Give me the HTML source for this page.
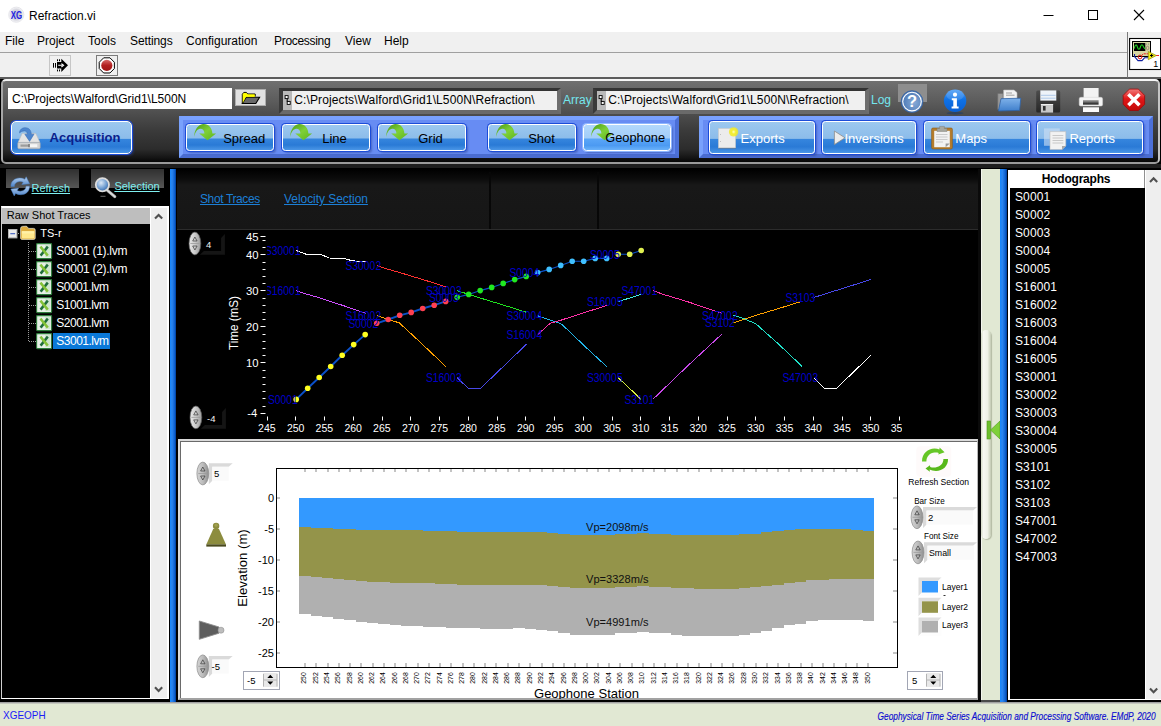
<!DOCTYPE html>
<html>
<head>
<meta charset="utf-8">
<title>Refraction.vi</title>
<style>
*{box-sizing:border-box;margin:0;padding:0}
html,body{width:1161px;height:726px;overflow:hidden;background:#000;font-family:"Liberation Sans",sans-serif;font-size:12px;color:#000}
.abs{position:absolute}
#root{position:absolute;left:0;top:0;width:1161px;height:726px;overflow:hidden;background:#000}
/* title + menu */
#title{left:0;top:0;width:1161px;height:32px;background:#fff}
#title .t{left:29px;top:9px;font-size:12px;color:#000;white-space:nowrap}
#menu{left:0;top:32px;width:1161px;height:21px;background:#f0f0f0}
#menul{left:0;top:52px;width:1127px;height:1px;background:#a0a0a0}
#menu span{position:absolute;top:2px;font-size:12px;white-space:nowrap;color:#000}
#tool{left:0;top:53px;width:1161px;height:24px;background:#f0f0f0}
/* dark panel */
#dark{left:1px;top:79px;width:1159px;height:85px;background:linear-gradient(#707070 0,#5c5c5c 25%,#4b4b4b 43%,#3a3a3a 62%,#2c2c2c 84%,#161616 94%,#050505 100%);border:2px solid;border-color:#f6f6f6 #c4c4c4 #9a9a9a #a6a6a6;border-radius:5px}
#darkbg{left:0;top:77px;width:1161px;height:92px;background:linear-gradient(#5c5c5c 0,#5c5c5c 2px,#000 2px,#000 87px,#1e1e1e 87px,#1e1e1e 91px,#000 91px)}
.inp{background:#fff;height:21px;font-size:12px;line-height:22px;white-space:nowrap;overflow:hidden;color:#000}
.bluep{background:#678cf3;border-style:solid;border-width:4px;border-color:#79a1ff #4c70d8 #4a6cd0 #79a1fc}
.btn{border:1.5px solid #fff;border-radius:3.5px;background:linear-gradient(#9cc8ef 0,#8cbcea 53%,#3686de 55%,#2a7ad6 80%,#4a96e6 100%);box-shadow:0 0 0 1px #1c4cd8, 2px 2px 2px rgba(40,60,140,0.45);font-size:13px;white-space:nowrap}
.btn.hl{background:linear-gradient(#b2d8fc 0,#a2cdf8 53%,#5aa6f8 55%,#4c9af2 82%,#6ab2fa 100%);box-shadow:0 0 0 1px #8db6ff, 2px 2px 2px rgba(40,60,140,0.45)}
.btn span{position:absolute;white-space:nowrap;z-index:5}
.lbl{color:#74e6ee;font-size:12px;white-space:nowrap}
/* left */
.tv{color:#fff;font-size:13px;white-space:nowrap}
.lnk{font-size:13px;text-decoration:underline;white-space:nowrap}
.hod{color:#fff;font-size:12px;white-space:nowrap;left:1015px}
</style>
</head>
<body>
<div id="root">

<!-- TITLE BAR -->
<div id="title" class="abs">
  <svg class="abs" style="left:6px;top:4px" width="22" height="22" viewBox="6 4 22 22"><defs><radialGradient id="xg" cx="0.5" cy="0.5" r="0.5"><stop offset="0" stop-color="#b9b9c4"/><stop offset="0.7" stop-color="#d8d8e0"/><stop offset="1" stop-color="#fbfbfd"/></radialGradient></defs><circle cx="16.3" cy="14.7" r="7.6" fill="url(#xg)" stroke="#dcdce2" stroke-width="0.7"/><text x="16.5" y="18.6" font-family="Liberation Sans" font-size="10.2" font-weight="bold" fill="#2222e4" text-anchor="middle" textLength="11.4" lengthAdjust="spacingAndGlyphs">XG</text></svg>
  <div class="abs t">Refraction.vi</div>
  <svg class="abs" style="left:1040px;top:6px" width="110" height="20" viewBox="0 0 110 20"><path d="M3.5 9.5h10" stroke="#000" stroke-width="1" fill="none"/><rect x="48.5" y="4.5" width="9" height="9" fill="none" stroke="#000" stroke-width="1"/><path d="M94 4l10 10M104 4l-10 10" stroke="#000" stroke-width="1.1" fill="none"/></svg>
</div>

<!-- MENU -->
<div id="menu" class="abs">
  <span style="left:5px">File</span><span style="left:37px">Project</span><span style="left:88px">Tools</span><span style="left:130px;letter-spacing:-0.1px">Settings</span><span style="left:186px">Configuration</span><span style="left:274px;letter-spacing:-0.3px">Processing</span><span style="left:345px">View</span><span style="left:384px">Help</span>
</div>
<div id="tool" class="abs"></div><div id="menul" class="abs"></div>

<!-- DARK PANEL -->
<div id="darkbg" class="abs"></div>
<div id="dark" class="abs"></div>
<svg width="0" height="0" style="position:absolute">
  <defs>
    <linearGradient id="gg" x1="0" y1="0" x2="1" y2="1"><stop offset="0" stop-color="#2f7a10"/><stop offset="0.45" stop-color="#6cc52a"/><stop offset="1" stop-color="#58b01c"/></linearGradient>
    <symbol id="garrow" viewBox="0 0 24 18">
      <path d="M1.5 10.5 C2.5 4.5 8 1 13 2 C17 2.8 19.5 5.5 19.8 8.8 L23.3 8.8 L17.2 16.5 L10.6 8.8 L14.6 8.8 C14.2 6.8 12.6 5.6 10.4 5.5 C6.5 5.3 3.6 7.6 1.5 10.5 Z" fill="url(#gg)" stroke="#3d8a14" stroke-width="0.5"/>
    </symbol>
  </defs>
</svg>
<div class="abs inp" style="left:8px;top:88px;width:224px;padding-left:4px">C:\Projects\Walford\Grid1\L500N</div>
<div class="abs" id="fold" style="left:235px;top:89px;width:31px;height:17px;background:#e1e1e1;border:1px solid #adadad"></div>
<div class="abs" style="left:279px;top:88px;width:282px;height:26px;background:#3a3a3a;border-style:solid;border-width:3px 4px 4px 4px;border-color:#333 #6e6e6e #6a6a6a #3a3a3a"></div>
<div class="abs" style="left:283px;top:91px;width:9px;height:19px;background:#b9b9b9"></div>
<div class="abs inp" style="left:292px;top:91px;width:265px;height:19px;background:#f0f0f0;padding-left:2.3px;line-height:19px;letter-spacing:0.11px">C:\Projects\Walford\Grid1\L500N\Refraction\</div>
<div class="abs lbl" style="left:563px;top:93px">Array</div>
<div class="abs" style="left:593px;top:88px;width:276px;height:26px;background:#3a3a3a;border-style:solid;border-width:3px 4px 4px 4px;border-color:#333 #6e6e6e #6a6a6a #3a3a3a"></div>
<div class="abs" style="left:597px;top:91px;width:9px;height:19px;background:#b9b9b9"></div>
<div class="abs inp" style="left:606px;top:91px;width:259px;height:19px;background:#f0f0f0;padding-left:2.3px;line-height:19px;letter-spacing:0.11px">C:\Projects\Walford\Grid1\L500N\Refraction\</div>
<div class="abs lbl" style="left:871px;top:93px">Log</div>

<div class="abs" style="left:898px;top:84px;width:29px;height:18px;background:#8e8e8e"></div>
<!-- Acquisition -->
<div class="abs btn" style="left:11px;top:121px;width:121px;height:33px;border-radius:5px"><span style="left:37.6px;top:8px;font-weight:bold;color:#0b1e8c;font-size:13px">Acquisition</span></div>

<!-- blue panel 1 -->
<div class="abs bluep" style="left:179px;top:116px;width:500px;height:42px"></div>
<div class="abs btn" style="left:186px;top:124px;width:88px;height:27px"><span style="left:36.2px;top:6px">Spread</span></div>
<div class="abs btn" style="left:282px;top:124px;width:88px;height:27px"><span style="left:39.2px;top:6px">Line</span></div>
<div class="abs btn" style="left:378px;top:124px;width:88px;height:27px"><span style="left:39.2px;top:6px">Grid</span></div>
<div class="abs btn" style="left:488px;top:124px;width:88px;height:27px"><span style="left:39.2px;top:6px">Shot</span></div>
<div class="abs btn hl" style="left:583px;top:124px;width:88px;height:27px"><span style="left:21.3px;top:5.3px;font-size:12.8px">Geophone</span></div>

<!-- blue panel 2 -->
<div class="abs bluep" style="left:699px;top:116px;width:454px;height:42px"></div>
<div class="abs btn" style="left:709px;top:121px;width:106px;height:33px;color:#fff"><span style="left:30.6px;top:8.8px">Exports</span></div>
<div class="abs btn" style="left:822px;top:121px;width:94px;height:33px;color:#fff"><span style="left:21.5px;top:8.8px">Inversions</span></div>
<div class="abs btn" style="left:924px;top:121px;width:106px;height:33px;color:#fff"><span style="left:30.3px;top:8.8px">Maps</span></div>
<div class="abs btn" style="left:1037px;top:121px;width:106px;height:33px;color:#fff"><span style="left:31.4px;top:8.8px">Reports</span></div>

<!-- LEFT: refresh / selection -->
<div class="abs" style="left:6px;top:169px;width:73px;height:19px;background:linear-gradient(#303030,#565656)"></div>
<div class="abs" style="left:91px;top:169px;width:73px;height:19px;background:linear-gradient(#303030,#565656)"></div>
<div class="abs lnk" style="left:31.5px;top:181.5px;color:#7ff0f0;font-size:11px;line-height:13px">Refresh</div>
<div class="abs lnk" style="left:114.4px;top:179.6px;color:#7ff0f0;font-size:11px;line-height:13px">Selection</div>

<!-- tree panel -->
<div class="abs" style="left:0.5px;top:205.5px;width:168.5px;height:493.5px;background:#000;border-style:solid;border-width:2px 2px 1px 1.3px;border-color:#fff #fff #fff #d0d0d0"></div>
<div class="abs" style="left:1.8px;top:207.5px;width:148.2px;height:16.3px;background:#bebebe;font-size:11px;line-height:15px;padding-left:5px">Raw Shot Traces</div>
<div class="abs" style="left:150px;top:207.5px;width:17px;height:490.5px;background:#eee;border-left:1px solid #fff"></div>
<svg class="abs" style="left:150px;top:207px" width="18" height="491" viewBox="0 0 18 491"><path d="M5 11.6l3.6-3.7 3.6 3.7" fill="none" stroke="#505050" stroke-width="2.1"/><path d="M5 480.2l3.6 3.7 3.6-3.7" fill="none" stroke="#505050" stroke-width="2.1"/></svg>
<svg class="abs" style="left:0;top:225px" width="60" height="130" viewBox="0 225 60 130">
<path d="M28.5 242V342" stroke="#9a9a9a" stroke-width="1" stroke-dasharray="1 1" fill="none"/>
<path d="M29 251.5H37" stroke="#9a9a9a" stroke-width="1" stroke-dasharray="1 1" fill="none"/>
<path d="M29 269.5H37" stroke="#9a9a9a" stroke-width="1" stroke-dasharray="1 1" fill="none"/>
<path d="M29 287.5H37" stroke="#9a9a9a" stroke-width="1" stroke-dasharray="1 1" fill="none"/>
<path d="M29 305.5H37" stroke="#9a9a9a" stroke-width="1" stroke-dasharray="1 1" fill="none"/>
<path d="M29 323.5H37" stroke="#9a9a9a" stroke-width="1" stroke-dasharray="1 1" fill="none"/>
<path d="M29 341.5H37" stroke="#9a9a9a" stroke-width="1" stroke-dasharray="1 1" fill="none"/>
<rect x="18" y="233" width="1" height="1" fill="#9a9a9a"/>
<rect x="8.5" y="229.5" width="8.4" height="8.4" fill="#ececec" stroke="#b4b4b4"/><path d="M10.3 233.7h4.8" stroke="#3c5cc0" stroke-width="1.1"/>
<g transform="translate(20,225)"><path d="M0.6 3.6 Q0.6 1.6 2.4 1.4 L6 1.2 Q7 1.2 7.6 2.2 L8.4 3.4 H13.6 Q15.2 3.4 15.2 5 V13 Q15.2 14.4 13.8 14.4 H2 Q0.6 14.4 0.6 13 Z" fill="#dcaa3c" stroke="#f4f0e0" stroke-width="0.7"/><path d="M1.8 6.2 H14.2 V12.6 Q14.2 13.4 13.4 13.4 H2.6 Q1.8 13.4 1.8 12.6 Z" fill="#ffe88c"/><path d="M1.8 6.2 H14.2 V8.5 H1.8Z" fill="#fff0a8"/></g>
<g transform="translate(36,243)"><rect x="0.6" y="0.6" width="15" height="15" rx="0.8" fill="#e6f0e6" stroke="#2e7d3c" stroke-width="1.1"/><rect x="9" y="2" width="5.4" height="12" fill="#cfe6cf"/><path d="M11.8 3.6 L4.6 12.6" stroke="#1f6e3a" stroke-width="2.5" fill="none"/><path d="M4.4 3.6 L11.8 12.6" stroke="#84c238" stroke-width="2.5" fill="none"/></g>
<g transform="translate(36,261)"><rect x="0.6" y="0.6" width="15" height="15" rx="0.8" fill="#e6f0e6" stroke="#2e7d3c" stroke-width="1.1"/><rect x="9" y="2" width="5.4" height="12" fill="#cfe6cf"/><path d="M11.8 3.6 L4.6 12.6" stroke="#1f6e3a" stroke-width="2.5" fill="none"/><path d="M4.4 3.6 L11.8 12.6" stroke="#84c238" stroke-width="2.5" fill="none"/></g>
<g transform="translate(36,279)"><rect x="0.6" y="0.6" width="15" height="15" rx="0.8" fill="#e6f0e6" stroke="#2e7d3c" stroke-width="1.1"/><rect x="9" y="2" width="5.4" height="12" fill="#cfe6cf"/><path d="M11.8 3.6 L4.6 12.6" stroke="#1f6e3a" stroke-width="2.5" fill="none"/><path d="M4.4 3.6 L11.8 12.6" stroke="#84c238" stroke-width="2.5" fill="none"/></g>
<g transform="translate(36,297)"><rect x="0.6" y="0.6" width="15" height="15" rx="0.8" fill="#e6f0e6" stroke="#2e7d3c" stroke-width="1.1"/><rect x="9" y="2" width="5.4" height="12" fill="#cfe6cf"/><path d="M11.8 3.6 L4.6 12.6" stroke="#1f6e3a" stroke-width="2.5" fill="none"/><path d="M4.4 3.6 L11.8 12.6" stroke="#84c238" stroke-width="2.5" fill="none"/></g>
<g transform="translate(36,315)"><rect x="0.6" y="0.6" width="15" height="15" rx="0.8" fill="#e6f0e6" stroke="#2e7d3c" stroke-width="1.1"/><rect x="9" y="2" width="5.4" height="12" fill="#cfe6cf"/><path d="M11.8 3.6 L4.6 12.6" stroke="#1f6e3a" stroke-width="2.5" fill="none"/><path d="M4.4 3.6 L11.8 12.6" stroke="#84c238" stroke-width="2.5" fill="none"/></g>
<g transform="translate(36,333)"><rect x="0.6" y="0.6" width="15" height="15" rx="0.8" fill="#e6f0e6" stroke="#2e7d3c" stroke-width="1.1"/><rect x="9" y="2" width="5.4" height="12" fill="#cfe6cf"/><path d="M11.8 3.6 L4.6 12.6" stroke="#1f6e3a" stroke-width="2.5" fill="none"/><path d="M4.4 3.6 L11.8 12.6" stroke="#84c238" stroke-width="2.5" fill="none"/></g>
</svg>
<div class="abs" style="left:53px;top:333px;width:57px;height:16px;background:#0a78d8"></div>
<div class="abs tv" style="left:40.3px;top:225px;font-size:11px;line-height:16px">TS-r</div>
<div class="abs tv" style="left:56.3px;top:243px;font-size:12px;line-height:16px;letter-spacing:-0.3px">S0001 (1).lvm</div>
<div class="abs tv" style="left:56.3px;top:261px;font-size:12px;line-height:16px;letter-spacing:-0.3px">S0001 (2).lvm</div>
<div class="abs tv" style="left:56.3px;top:279px;font-size:12px;line-height:16px;letter-spacing:-0.5px">S0001.lvm</div>
<div class="abs tv" style="left:56.3px;top:297px;font-size:12px;line-height:16px;letter-spacing:-0.5px">S1001.lvm</div>
<div class="abs tv" style="left:56.3px;top:315px;font-size:12px;line-height:16px;letter-spacing:-0.5px">S2001.lvm</div>
<div class="abs tv" style="left:56.3px;top:333px;font-size:12px;line-height:16px;letter-spacing:-0.5px">S3001.lvm</div>

<!-- blue vertical bars -->
<div class="abs" style="left:169.8px;top:169px;width:6.4px;height:532.6px;z-index:2;background:linear-gradient(90deg,#1788ff 0,#2a84ee 35%,#0d62d2 75%,#003c98 100%)"></div>
<div class="abs" style="left:1000.2px;top:169px;width:6.4px;height:532.6px;z-index:2;background:linear-gradient(90deg,#1788ff 0,#2a84ee 35%,#0d62d2 75%,#003c98 100%)"></div>

<!-- chart panel -->
<div class="abs" style="left:177px;top:169px;width:803px;height:61px;background:linear-gradient(#000 0,#0c0c0c 10px,#181818 16px,#161616 100%);border-bottom:1px solid #2c2c2c"></div>
<div class="abs" style="left:488.8px;top:172px;width:2.2px;height:57px;background:linear-gradient(90deg,#0e0e0e,#030303 40%,#030303 70%,#1c1c1c)"></div>
<div class="abs" style="left:597.2px;top:172px;width:2.2px;height:57px;background:linear-gradient(90deg,#0e0e0e,#030303 40%,#030303 70%,#1c1c1c)"></div>
<div class="abs lnk" style="left:200px;top:192px;color:#1c7fd6;font-size:12px;letter-spacing:-0.38px">Shot Traces</div>
<div class="abs lnk" style="left:284px;top:192px;color:#1c7fd6;font-size:12px;letter-spacing:-0.05px">Velocity Section</div>
<svg id="chart" class="abs" style="left:177px;top:230px" width="803" height="209" viewBox="177 230 803 209"><path d="M260.5 413.5H265.5" stroke="#fff" stroke-width="1"/>
<path d="M262.5 406.5H265.5" stroke="#fff" stroke-width="1"/>
<path d="M262.5 398.5H265.5" stroke="#fff" stroke-width="1"/>
<path d="M262.5 391.5H265.5" stroke="#fff" stroke-width="1"/>
<path d="M262.5 384.5H265.5" stroke="#fff" stroke-width="1"/>
<path d="M262.5 377.5H265.5" stroke="#fff" stroke-width="1"/>
<path d="M262.5 370.5H265.5" stroke="#fff" stroke-width="1"/>
<path d="M260.5 362.5H265.5" stroke="#fff" stroke-width="1"/>
<path d="M262.5 355.5H265.5" stroke="#fff" stroke-width="1"/>
<path d="M262.5 348.5H265.5" stroke="#fff" stroke-width="1"/>
<path d="M262.5 341.5H265.5" stroke="#fff" stroke-width="1"/>
<path d="M262.5 334.5H265.5" stroke="#fff" stroke-width="1"/>
<path d="M260.5 326.5H265.5" stroke="#fff" stroke-width="1"/>
<path d="M262.5 319.5H265.5" stroke="#fff" stroke-width="1"/>
<path d="M262.5 312.5H265.5" stroke="#fff" stroke-width="1"/>
<path d="M262.5 305.5H265.5" stroke="#fff" stroke-width="1"/>
<path d="M262.5 298.5H265.5" stroke="#fff" stroke-width="1"/>
<path d="M260.5 290.5H265.5" stroke="#fff" stroke-width="1"/>
<path d="M262.5 283.5H265.5" stroke="#fff" stroke-width="1"/>
<path d="M262.5 276.5H265.5" stroke="#fff" stroke-width="1"/>
<path d="M262.5 269.5H265.5" stroke="#fff" stroke-width="1"/>
<path d="M262.5 262.5H265.5" stroke="#fff" stroke-width="1"/>
<path d="M260.5 254.5H265.5" stroke="#fff" stroke-width="1"/>
<path d="M262.5 247.5H265.5" stroke="#fff" stroke-width="1"/>
<path d="M262.5 240.5H265.5" stroke="#fff" stroke-width="1"/>
<path d="M260.5 236.5H265.5" stroke="#fff" stroke-width="1"/>
<text x="258.5" y="240.5" font-size="11.3" fill="#fff" text-anchor="end">45</text>
<text x="258.5" y="258.5" font-size="11.3" fill="#fff" text-anchor="end">40</text>
<text x="258.5" y="294.5" font-size="11.3" fill="#fff" text-anchor="end">30</text>
<text x="258.5" y="330.5" font-size="11.3" fill="#fff" text-anchor="end">20</text>
<text x="258.5" y="366.5" font-size="11.3" fill="#fff" text-anchor="end">10</text>
<text x="257.4" y="416.9" font-size="11.3" fill="#fff" text-anchor="end">-4</text>
<text transform="translate(238.3,323) rotate(-90)" font-size="12" fill="#fff" text-anchor="middle" textLength="54" lengthAdjust="spacingAndGlyphs">Time (mS)</text>
<path d="M267.5 416.5V420.5" stroke="#fff" stroke-width="1"/>
<path d="M295.5 416.5V420.5" stroke="#fff" stroke-width="1"/>
<path d="M324.5 416.5V420.5" stroke="#fff" stroke-width="1"/>
<path d="M353.5 416.5V420.5" stroke="#fff" stroke-width="1"/>
<path d="M382.5 416.5V420.5" stroke="#fff" stroke-width="1"/>
<path d="M410.5 416.5V420.5" stroke="#fff" stroke-width="1"/>
<path d="M439.5 416.5V420.5" stroke="#fff" stroke-width="1"/>
<path d="M468.5 416.5V420.5" stroke="#fff" stroke-width="1"/>
<path d="M497.5 416.5V420.5" stroke="#fff" stroke-width="1"/>
<path d="M525.5 416.5V420.5" stroke="#fff" stroke-width="1"/>
<path d="M554.5 416.5V420.5" stroke="#fff" stroke-width="1"/>
<path d="M583.5 416.5V420.5" stroke="#fff" stroke-width="1"/>
<path d="M612.5 416.5V420.5" stroke="#fff" stroke-width="1"/>
<path d="M640.5 416.5V420.5" stroke="#fff" stroke-width="1"/>
<path d="M669.5 416.5V420.5" stroke="#fff" stroke-width="1"/>
<path d="M698.5 416.5V420.5" stroke="#fff" stroke-width="1"/>
<path d="M727.5 416.5V420.5" stroke="#fff" stroke-width="1"/>
<path d="M755.5 416.5V420.5" stroke="#fff" stroke-width="1"/>
<path d="M784.5 416.5V420.5" stroke="#fff" stroke-width="1"/>
<path d="M813.5 416.5V420.5" stroke="#fff" stroke-width="1"/>
<path d="M842.5 416.5V420.5" stroke="#fff" stroke-width="1"/>
<path d="M870.5 416.5V420.5" stroke="#fff" stroke-width="1"/>
<path d="M899.5 416.5V420.5" stroke="#fff" stroke-width="1"/>
<clipPath id="cx"><rect x="177" y="420" width="725" height="20"/></clipPath><g clip-path="url(#cx)">
<text x="266.9" y="432.4" font-size="11.3" fill="#fff" text-anchor="middle" textLength="17.6" lengthAdjust="spacingAndGlyphs">245</text>
<text x="295.7" y="432.4" font-size="11.3" fill="#fff" text-anchor="middle" textLength="17.6" lengthAdjust="spacingAndGlyphs">250</text>
<text x="324.4" y="432.4" font-size="11.3" fill="#fff" text-anchor="middle" textLength="17.6" lengthAdjust="spacingAndGlyphs">255</text>
<text x="353.2" y="432.4" font-size="11.3" fill="#fff" text-anchor="middle" textLength="17.6" lengthAdjust="spacingAndGlyphs">260</text>
<text x="381.9" y="432.4" font-size="11.3" fill="#fff" text-anchor="middle" textLength="17.6" lengthAdjust="spacingAndGlyphs">265</text>
<text x="410.7" y="432.4" font-size="11.3" fill="#fff" text-anchor="middle" textLength="17.6" lengthAdjust="spacingAndGlyphs">270</text>
<text x="439.4" y="432.4" font-size="11.3" fill="#fff" text-anchor="middle" textLength="17.6" lengthAdjust="spacingAndGlyphs">275</text>
<text x="468.2" y="432.4" font-size="11.3" fill="#fff" text-anchor="middle" textLength="17.6" lengthAdjust="spacingAndGlyphs">280</text>
<text x="496.9" y="432.4" font-size="11.3" fill="#fff" text-anchor="middle" textLength="17.6" lengthAdjust="spacingAndGlyphs">285</text>
<text x="525.7" y="432.4" font-size="11.3" fill="#fff" text-anchor="middle" textLength="17.6" lengthAdjust="spacingAndGlyphs">290</text>
<text x="554.5" y="432.4" font-size="11.3" fill="#fff" text-anchor="middle" textLength="17.6" lengthAdjust="spacingAndGlyphs">295</text>
<text x="583.2" y="432.4" font-size="11.3" fill="#fff" text-anchor="middle" textLength="17.6" lengthAdjust="spacingAndGlyphs">300</text>
<text x="612.0" y="432.4" font-size="11.3" fill="#fff" text-anchor="middle" textLength="17.6" lengthAdjust="spacingAndGlyphs">305</text>
<text x="640.7" y="432.4" font-size="11.3" fill="#fff" text-anchor="middle" textLength="17.6" lengthAdjust="spacingAndGlyphs">310</text>
<text x="669.5" y="432.4" font-size="11.3" fill="#fff" text-anchor="middle" textLength="17.6" lengthAdjust="spacingAndGlyphs">315</text>
<text x="698.2" y="432.4" font-size="11.3" fill="#fff" text-anchor="middle" textLength="17.6" lengthAdjust="spacingAndGlyphs">320</text>
<text x="727.0" y="432.4" font-size="11.3" fill="#fff" text-anchor="middle" textLength="17.6" lengthAdjust="spacingAndGlyphs">325</text>
<text x="755.7" y="432.4" font-size="11.3" fill="#fff" text-anchor="middle" textLength="17.6" lengthAdjust="spacingAndGlyphs">330</text>
<text x="784.5" y="432.4" font-size="11.3" fill="#fff" text-anchor="middle" textLength="17.6" lengthAdjust="spacingAndGlyphs">335</text>
<text x="813.2" y="432.4" font-size="11.3" fill="#fff" text-anchor="middle" textLength="17.6" lengthAdjust="spacingAndGlyphs">340</text>
<text x="842.0" y="432.4" font-size="11.3" fill="#fff" text-anchor="middle" textLength="17.6" lengthAdjust="spacingAndGlyphs">345</text>
<text x="870.7" y="432.4" font-size="11.3" fill="#fff" text-anchor="middle" textLength="17.6" lengthAdjust="spacingAndGlyphs">350</text>
<text x="899.5" y="432.4" font-size="11.3" fill="#fff" text-anchor="middle" textLength="17.6" lengthAdjust="spacingAndGlyphs">355</text>
</g>
<g shape-rendering="crispEdges" fill="none" stroke-width="1">
<path d="M296.2 250.5 L306.4 254.3 L320.6 254.3 L329.2 258.0 L343.4 258.4 L352.9 260.9 L366.1 261.5" stroke="#ffffff"/>
<path d="M376.7 265.6 L388.0 269.2 L400.0 272.6 L411.0 276.0 L423.0 279.6 L434.5 283.2 L445.7 286.9" stroke="#ff3030"/>
<path d="M457.2 290.6 L468.7 294.4 L480.2 298.0 L491.7 301.5 L503.2 305.0 L514.7 308.6 L526.2 312.2" stroke="#20e020"/>
<path d="M537.7 315.7 L549.2 319.8 L558.4 322.9 L562.0 324.5 L588.8 350.0 L606.7 366.6" stroke="#22b4e8"/>
<path d="M618.2 377.8 L629.7 388.5 L641.2 399.5" stroke="#d8f040"/>
<path d="M296.2 290.6 L306.4 294.0 L320.0 298.0 L343.0 305.5 L366.2 313.4" stroke="#d050ff"/>
<path d="M376.7 315.7 L399.3 322.9 L417.3 339.5 L445.9 366.6" stroke="#ffa000"/>
<path d="M457.2 377.8 L468.3 388.3 L480.6 388.3 L526.5 344.2" stroke="#4848e8"/>
<path d="M537.7 334.6 L550.0 323.4 L558.4 321.0 L606.8 305.4" stroke="#ff30a8"/>
<path d="M618.2 301.6 L641.2 294.4" stroke="#40e8e0"/>
<path d="M652.7 290.6 L664.0 294.6 L687.0 301.5 L721.7 313.3" stroke="#ff30a8"/>
<path d="M733.2 315.2 L744.7 319.0 L756.0 323.9 L779.0 344.5 L802.2 366.5" stroke="#20e0c8"/>
<path d="M813.7 377.8 L824.4 388.5 L836.3 388.5 L870.7 355.5" stroke="#ffffff"/>
<path d="M652.7 399.5 L687.0 366.5 L722.0 334.0" stroke="#c848e8"/>
<path d="M733.2 322.9 L754.8 315.7 L779.0 308.4 L802.2 301.2" stroke="#ffa000"/>
<path d="M813.7 297.5 L836.7 290.3 L871.2 279.4" stroke="#4848e8"/>
</g>
<path d="M296.2 399.4 L307.7 388.2 L319.2 377.5 L330.7 366.5 L342.2 355.3 L353.7 344.6 L365.2 334.6" stroke="#0a50c8" stroke-width="1.9" fill="none"/>
<path d="M376.7 323.3 L388.2 319.5 L399.7 315.3 L411.2 312.4 L422.7 308.5 L434.2 305.2 L445.7 301.4" stroke="#0a50c8" stroke-width="1.9" fill="none"/>
<path d="M457.2 297.3 L468.7 294.4 L480.2 290.6 L491.7 287.4 L503.2 283.4 L514.7 279.6 L526.2 276.4" stroke="#0a50c8" stroke-width="1.1" fill="none"/>
<path d="M537.7 272.6 L549.2 269.4 L560.7 265.4 L572.2 261.3 L583.7 261.3 L595.2 258.4 L606.7 258.4" stroke="#0a50c8" stroke-width="1.1" fill="none"/>
<path d="M618.2 254.3 L629.7 254.3 L641.2 250.5" stroke="#0a50c8" stroke-width="1.1" fill="none"/>
<circle cx="296.2" cy="399.4" r="2.8" fill="#ffff20"/>
<circle cx="307.7" cy="388.2" r="2.8" fill="#ffff20"/>
<circle cx="319.2" cy="377.5" r="2.8" fill="#ffff20"/>
<circle cx="330.7" cy="366.5" r="2.8" fill="#ffff20"/>
<circle cx="342.2" cy="355.3" r="2.8" fill="#ffff20"/>
<circle cx="353.7" cy="344.6" r="2.8" fill="#ffff20"/>
<circle cx="365.2" cy="334.6" r="2.8" fill="#ffff20"/>
<circle cx="376.7" cy="323.3" r="2.8" fill="#ff4050"/>
<circle cx="388.2" cy="319.5" r="2.8" fill="#ff4050"/>
<circle cx="399.7" cy="315.3" r="2.8" fill="#ff4050"/>
<circle cx="411.2" cy="312.4" r="2.8" fill="#ff4050"/>
<circle cx="422.7" cy="308.5" r="2.8" fill="#ff4050"/>
<circle cx="434.2" cy="305.2" r="2.8" fill="#ff4050"/>
<circle cx="445.7" cy="301.4" r="2.8" fill="#ff4050"/>
<circle cx="457.2" cy="297.3" r="2.8" fill="#20e820"/>
<circle cx="468.7" cy="294.4" r="2.8" fill="#20e820"/>
<circle cx="480.2" cy="290.6" r="2.8" fill="#20e820"/>
<circle cx="491.7" cy="287.4" r="2.8" fill="#20e820"/>
<circle cx="503.2" cy="283.4" r="2.8" fill="#20e820"/>
<circle cx="514.7" cy="279.6" r="2.8" fill="#20e820"/>
<circle cx="526.2" cy="276.4" r="2.8" fill="#20e820"/>
<circle cx="537.7" cy="272.6" r="2.8" fill="#40c0ff"/>
<circle cx="549.2" cy="269.4" r="2.8" fill="#40c0ff"/>
<circle cx="560.7" cy="265.4" r="2.8" fill="#40c0ff"/>
<circle cx="572.2" cy="261.3" r="2.8" fill="#40c0ff"/>
<circle cx="583.7" cy="261.3" r="2.8" fill="#40c0ff"/>
<circle cx="595.2" cy="258.4" r="2.8" fill="#40c0ff"/>
<circle cx="606.7" cy="258.4" r="2.8" fill="#40c0ff"/>
<circle cx="618.2" cy="254.3" r="2.8" fill="#e0f050"/>
<circle cx="629.7" cy="254.3" r="2.8" fill="#e0f050"/>
<circle cx="641.2" cy="250.5" r="2.8" fill="#e0f050"/>
<clipPath id="cl"><rect x="267" y="230" width="640" height="186"/></clipPath><g clip-path="url(#cl)" font-size="12" fill="#0000c8" text-anchor="middle">
<text x="282.8" y="254.8" textLength="35.7" lengthAdjust="spacingAndGlyphs">S30001</text>
<text x="363.3" y="269.9" textLength="35.7" lengthAdjust="spacingAndGlyphs">S30002</text>
<text x="443.8" y="294.9" textLength="35.7" lengthAdjust="spacingAndGlyphs">S30003</text>
<text x="524.3" y="320.0" textLength="35.7" lengthAdjust="spacingAndGlyphs">S30004</text>
<text x="604.8" y="382.1" textLength="35.7" lengthAdjust="spacingAndGlyphs">S30005</text>
<text x="282.8" y="294.9" textLength="35.7" lengthAdjust="spacingAndGlyphs">S16001</text>
<text x="363.3" y="320.0" textLength="35.7" lengthAdjust="spacingAndGlyphs">S16002</text>
<text x="443.8" y="382.1" textLength="35.7" lengthAdjust="spacingAndGlyphs">S16003</text>
<text x="524.3" y="338.9" textLength="35.7" lengthAdjust="spacingAndGlyphs">S16004</text>
<text x="604.8" y="305.9" textLength="35.7" lengthAdjust="spacingAndGlyphs">S16005</text>
<text x="639.3" y="294.9" textLength="35.7" lengthAdjust="spacingAndGlyphs">S47001</text>
<text x="719.8" y="319.5" textLength="35.7" lengthAdjust="spacingAndGlyphs">S47002</text>
<text x="800.3" y="382.1" textLength="35.7" lengthAdjust="spacingAndGlyphs">S47003</text>
<text x="639.3" y="403.8" textLength="29.8" lengthAdjust="spacingAndGlyphs">S3101</text>
<text x="719.8" y="327.2" textLength="29.8" lengthAdjust="spacingAndGlyphs">S3102</text>
<text x="800.3" y="301.8" textLength="29.8" lengthAdjust="spacingAndGlyphs">S3103</text>
<text x="282.8" y="403.7" textLength="29.8" lengthAdjust="spacingAndGlyphs">S0001</text>
<text x="363.3" y="327.6" textLength="29.8" lengthAdjust="spacingAndGlyphs">S0002</text>
<text x="443.8" y="301.6" textLength="29.8" lengthAdjust="spacingAndGlyphs">S0003</text>
<text x="524.3" y="276.9" textLength="29.8" lengthAdjust="spacingAndGlyphs">S0004</text>
<text x="604.8" y="258.6" textLength="29.8" lengthAdjust="spacingAndGlyphs">S0005</text>
</g></svg>

<!-- white section panel -->
<div class="abs" style="left:178px;top:439px;width:800px;height:261px;background:#fff;border-style:solid;border-width:2px 1px 2px 2px;border-color:#dadada #b8b8b8 #a2a2a2 #dadada;box-shadow:inset 1px 1px 0 #6a6a6a"></div>
<svg id="sect" class="abs" style="left:180px;top:441px" width="796" height="258" viewBox="180 441 796 258"><g shape-rendering="crispEdges">
<polygon points="299.4,498.0 310.6,498.0 310.6,498.0 321.9,498.0 321.9,498.0 333.2,498.0 333.1,498.0 344.4,498.0 344.4,498.0 355.7,498.0 355.7,498.0 367.0,498.0 366.9,498.0 378.2,498.0 378.2,498.0 389.5,498.0 389.5,498.0 400.8,498.0 400.7,498.0 412.0,498.0 412.0,498.0 423.3,498.0 423.3,498.0 434.6,498.0 434.5,498.0 445.8,498.0 445.8,498.0 457.1,498.0 457.0,498.0 468.3,498.0 468.3,498.0 479.6,498.0 479.6,498.0 490.9,498.0 490.8,498.0 502.1,498.0 502.1,498.0 513.4,498.0 513.4,498.0 524.7,498.0 524.6,498.0 535.9,498.0 535.9,498.0 547.2,498.0 547.2,498.0 558.5,498.0 558.4,498.0 569.7,498.0 569.7,498.0 581.0,498.0 580.9,498.0 592.2,498.0 592.2,498.0 603.5,498.0 603.5,498.0 614.8,498.0 614.7,498.0 626.0,498.0 626.0,498.0 637.3,498.0 637.3,498.0 648.6,498.0 648.5,498.0 659.8,498.0 659.8,498.0 671.1,498.0 671.1,498.0 682.4,498.0 682.3,498.0 693.6,498.0 693.6,498.0 704.9,498.0 704.9,498.0 716.2,498.0 716.1,498.0 727.4,498.0 727.4,498.0 738.7,498.0 738.6,498.0 749.9,498.0 749.9,498.0 761.2,498.0 761.2,498.0 772.5,498.0 772.4,498.0 783.7,498.0 783.7,498.0 795.0,498.0 795.0,498.0 806.3,498.0 806.2,498.0 817.5,498.0 817.5,498.0 828.8,498.0 828.8,498.0 840.1,498.0 840.0,498.0 851.3,498.0 851.3,498.0 862.6,498.0 862.5,498.0 873.8,498.0 873.8,530.8 862.5,530.8 862.6,529.7 851.3,529.7 851.3,529.0 840.0,529.0 840.1,529.0 828.8,529.0 828.8,529.0 817.5,529.0 817.5,529.0 806.2,529.0 806.3,529.0 795.0,529.0 795.0,530.2 783.7,530.2 783.7,531.1 772.4,531.1 772.5,532.2 761.2,532.2 761.2,533.8 749.9,533.8 749.9,533.8 738.6,533.8 738.7,534.7 727.4,534.7 727.4,534.7 716.1,534.7 716.2,534.7 704.9,534.7 704.9,534.7 693.6,534.7 693.6,534.5 682.3,534.5 682.4,534.5 671.1,534.5 671.1,533.8 659.8,533.8 659.8,533.8 648.5,533.8 648.6,533.0 637.3,533.0 637.3,533.6 626.0,533.6 626.0,534.0 614.7,534.0 614.8,534.5 603.5,534.5 603.5,534.5 592.2,534.5 592.2,534.9 580.9,534.9 581.0,534.9 569.7,534.9 569.7,534.0 558.4,534.0 558.5,533.0 547.2,533.0 547.2,532.1 535.9,532.1 535.9,532.1 524.6,532.1 524.7,532.1 513.4,532.1 513.4,532.1 502.1,532.1 502.1,532.1 490.8,532.1 490.9,532.1 479.6,532.1 479.6,532.0 468.3,532.0 468.3,532.0 457.0,532.0 457.1,530.8 445.8,530.8 445.8,530.8 434.5,530.8 434.6,530.8 423.3,530.8 423.3,529.9 412.0,529.9 412.0,529.9 400.7,529.9 400.8,529.9 389.5,529.9 389.5,529.9 378.2,529.9 378.2,529.9 366.9,529.9 367.0,529.9 355.7,529.9 355.7,528.8 344.4,528.8 344.4,528.8 333.1,528.8 333.2,528.3 321.9,528.3 321.9,527.5 310.6,527.5 310.6,526.8 299.4,526.8" fill="#3399ff"/>
<polygon points="299.4,526.8 310.6,526.8 310.6,527.5 321.9,527.5 321.9,528.3 333.2,528.3 333.1,528.8 344.4,528.8 344.4,528.8 355.7,528.8 355.7,529.9 367.0,529.9 366.9,529.9 378.2,529.9 378.2,529.9 389.5,529.9 389.5,529.9 400.8,529.9 400.7,529.9 412.0,529.9 412.0,529.9 423.3,529.9 423.3,530.8 434.6,530.8 434.5,530.8 445.8,530.8 445.8,530.8 457.1,530.8 457.0,532.0 468.3,532.0 468.3,532.0 479.6,532.0 479.6,532.1 490.9,532.1 490.8,532.1 502.1,532.1 502.1,532.1 513.4,532.1 513.4,532.1 524.7,532.1 524.6,532.1 535.9,532.1 535.9,532.1 547.2,532.1 547.2,533.0 558.5,533.0 558.4,534.0 569.7,534.0 569.7,534.9 581.0,534.9 580.9,534.9 592.2,534.9 592.2,534.5 603.5,534.5 603.5,534.5 614.8,534.5 614.7,534.0 626.0,534.0 626.0,533.6 637.3,533.6 637.3,533.0 648.6,533.0 648.5,533.8 659.8,533.8 659.8,533.8 671.1,533.8 671.1,534.5 682.4,534.5 682.3,534.5 693.6,534.5 693.6,534.7 704.9,534.7 704.9,534.7 716.2,534.7 716.1,534.7 727.4,534.7 727.4,534.7 738.7,534.7 738.6,533.8 749.9,533.8 749.9,533.8 761.2,533.8 761.2,532.2 772.5,532.2 772.4,531.1 783.7,531.1 783.7,530.2 795.0,530.2 795.0,529.0 806.3,529.0 806.2,529.0 817.5,529.0 817.5,529.0 828.8,529.0 828.8,529.0 840.1,529.0 840.0,529.0 851.3,529.0 851.3,529.7 862.6,529.7 862.5,530.8 873.8,530.8 873.8,578.9 862.5,578.9 862.6,578.9 851.3,578.9 851.3,578.9 840.0,578.9 840.1,578.9 828.8,578.9 828.8,580.0 817.5,580.0 817.5,580.0 806.2,580.0 806.3,582.2 795.0,582.2 795.0,583.4 783.7,583.4 783.7,584.8 772.4,584.8 772.5,586.3 761.2,586.3 761.2,587.2 749.9,587.2 749.9,588.0 738.6,588.0 738.7,588.8 727.4,588.8 727.4,588.8 716.1,588.8 716.2,588.8 704.9,588.8 704.9,588.5 693.6,588.5 693.6,587.6 682.3,587.6 682.4,587.6 671.1,587.6 671.1,586.8 659.8,586.8 659.8,586.8 648.5,586.8 648.6,586.1 637.3,586.1 637.3,586.6 626.0,586.6 626.0,587.0 614.7,587.0 614.8,587.6 603.5,587.6 603.5,587.6 592.2,587.6 592.2,588.0 580.9,588.0 581.0,588.0 569.7,588.0 569.7,587.0 558.4,587.0 558.5,586.1 547.2,586.1 547.2,585.1 535.9,585.1 535.9,585.1 524.6,585.1 524.7,585.1 513.4,585.1 513.4,585.1 502.1,585.1 502.1,585.1 490.8,585.1 490.9,585.1 479.6,585.1 479.6,584.8 468.3,584.8 468.3,584.8 457.0,584.8 457.1,584.0 445.8,584.0 445.8,583.6 434.5,583.6 434.6,583.4 423.3,583.4 423.3,583.2 412.0,583.2 412.0,583.0 400.7,583.0 400.8,583.0 389.5,583.0 389.5,582.3 378.2,582.3 378.2,581.6 366.9,581.6 367.0,580.5 355.7,580.5 355.7,579.5 344.4,579.5 344.4,578.6 333.1,578.6 333.2,577.7 321.9,577.7 321.9,576.8 310.6,576.8 310.6,575.9 299.4,575.9" fill="#94944a"/>
<polygon points="299.4,575.9 310.6,575.9 310.6,576.8 321.9,576.8 321.9,577.7 333.2,577.7 333.1,578.6 344.4,578.6 344.4,579.5 355.7,579.5 355.7,580.5 367.0,580.5 366.9,581.6 378.2,581.6 378.2,582.3 389.5,582.3 389.5,583.0 400.8,583.0 400.7,583.0 412.0,583.0 412.0,583.2 423.3,583.2 423.3,583.4 434.6,583.4 434.5,583.6 445.8,583.6 445.8,584.0 457.1,584.0 457.0,584.8 468.3,584.8 468.3,584.8 479.6,584.8 479.6,585.1 490.9,585.1 490.8,585.1 502.1,585.1 502.1,585.1 513.4,585.1 513.4,585.1 524.7,585.1 524.6,585.1 535.9,585.1 535.9,585.1 547.2,585.1 547.2,586.1 558.5,586.1 558.4,587.0 569.7,587.0 569.7,588.0 581.0,588.0 580.9,588.0 592.2,588.0 592.2,587.6 603.5,587.6 603.5,587.6 614.8,587.6 614.7,587.0 626.0,587.0 626.0,586.6 637.3,586.6 637.3,586.1 648.6,586.1 648.5,586.8 659.8,586.8 659.8,586.8 671.1,586.8 671.1,587.6 682.4,587.6 682.3,587.6 693.6,587.6 693.6,588.5 704.9,588.5 704.9,588.8 716.2,588.8 716.1,588.8 727.4,588.8 727.4,588.8 738.7,588.8 738.6,588.0 749.9,588.0 749.9,587.2 761.2,587.2 761.2,586.3 772.5,586.3 772.4,584.8 783.7,584.8 783.7,583.4 795.0,583.4 795.0,582.2 806.3,582.2 806.2,580.0 817.5,580.0 817.5,580.0 828.8,580.0 828.8,578.9 840.1,578.9 840.0,578.9 851.3,578.9 851.3,578.9 862.6,578.9 862.5,578.9 873.8,578.9 873.8,620.7 862.5,620.7 862.6,619.8 851.3,619.8 851.3,619.8 840.0,619.8 840.1,619.8 828.8,619.8 828.8,619.8 817.5,619.8 817.5,621.0 806.2,621.0 806.3,623.7 795.0,623.7 795.0,624.6 783.7,624.6 783.7,627.8 772.4,627.8 772.5,631.0 761.2,631.0 761.2,632.8 749.9,632.8 749.9,634.6 738.6,634.6 738.7,635.9 727.4,635.9 727.4,635.9 716.1,635.9 716.2,635.9 704.9,635.9 704.9,635.9 693.6,635.9 693.6,635.5 682.3,635.5 682.4,634.8 671.1,634.8 671.1,632.9 659.8,632.9 659.8,632.9 648.5,632.9 648.6,631.9 637.3,631.9 637.3,632.5 626.0,632.5 626.0,633.4 614.7,633.4 614.8,634.8 603.5,634.8 603.5,634.8 592.2,634.8 592.2,635.3 580.9,635.3 581.0,635.3 569.7,635.3 569.7,633.4 558.4,633.4 558.5,631.2 547.2,631.2 547.2,629.8 535.9,629.8 535.9,628.9 524.6,628.9 524.7,628.1 513.4,628.1 513.4,628.7 502.1,628.7 502.1,628.7 490.8,628.7 490.9,629.3 479.6,629.3 479.6,628.4 468.3,628.4 468.3,627.8 457.0,627.8 457.1,627.8 445.8,627.8 445.8,627.1 434.5,627.1 434.6,626.7 423.3,626.7 423.3,626.4 412.0,626.4 412.0,625.7 400.7,625.7 400.8,624.8 389.5,624.8 389.5,623.9 378.2,623.9 378.2,623.3 366.9,623.3 367.0,621.6 355.7,621.6 355.7,620.3 344.4,620.3 344.4,618.9 333.1,618.9 333.2,617.4 321.9,617.4 321.9,615.6 310.6,615.6 310.6,614.4 299.4,614.4" fill="#b0b0b0"/>
<rect x="304" y="469" width="2" height="3" fill="#c4c4c4"/>
<rect x="304" y="663" width="2" height="4" fill="#c4c4c4"/>
<rect x="315" y="469" width="2" height="3" fill="#c4c4c4"/>
<rect x="315" y="663" width="2" height="4" fill="#c4c4c4"/>
<rect x="327" y="469" width="2" height="3" fill="#c4c4c4"/>
<rect x="327" y="663" width="2" height="4" fill="#c4c4c4"/>
<rect x="338" y="469" width="2" height="3" fill="#c4c4c4"/>
<rect x="338" y="663" width="2" height="4" fill="#c4c4c4"/>
<rect x="349" y="469" width="2" height="3" fill="#c4c4c4"/>
<rect x="349" y="663" width="2" height="4" fill="#c4c4c4"/>
<rect x="360" y="469" width="2" height="3" fill="#c4c4c4"/>
<rect x="360" y="663" width="2" height="4" fill="#c4c4c4"/>
<rect x="372" y="469" width="2" height="3" fill="#c4c4c4"/>
<rect x="372" y="663" width="2" height="4" fill="#c4c4c4"/>
<rect x="383" y="469" width="2" height="3" fill="#c4c4c4"/>
<rect x="383" y="663" width="2" height="4" fill="#c4c4c4"/>
<rect x="394" y="469" width="2" height="3" fill="#c4c4c4"/>
<rect x="394" y="663" width="2" height="4" fill="#c4c4c4"/>
<rect x="405" y="469" width="2" height="3" fill="#c4c4c4"/>
<rect x="405" y="663" width="2" height="4" fill="#c4c4c4"/>
<rect x="417" y="469" width="2" height="3" fill="#c4c4c4"/>
<rect x="417" y="663" width="2" height="4" fill="#c4c4c4"/>
<rect x="428" y="469" width="2" height="3" fill="#c4c4c4"/>
<rect x="428" y="663" width="2" height="4" fill="#c4c4c4"/>
<rect x="439" y="469" width="2" height="3" fill="#c4c4c4"/>
<rect x="439" y="663" width="2" height="4" fill="#c4c4c4"/>
<rect x="450" y="469" width="2" height="3" fill="#c4c4c4"/>
<rect x="450" y="663" width="2" height="4" fill="#c4c4c4"/>
<rect x="462" y="469" width="2" height="3" fill="#c4c4c4"/>
<rect x="462" y="663" width="2" height="4" fill="#c4c4c4"/>
<rect x="473" y="469" width="2" height="3" fill="#c4c4c4"/>
<rect x="473" y="663" width="2" height="4" fill="#c4c4c4"/>
<rect x="484" y="469" width="2" height="3" fill="#c4c4c4"/>
<rect x="484" y="663" width="2" height="4" fill="#c4c4c4"/>
<rect x="495" y="469" width="2" height="3" fill="#c4c4c4"/>
<rect x="495" y="663" width="2" height="4" fill="#c4c4c4"/>
<rect x="507" y="469" width="2" height="3" fill="#c4c4c4"/>
<rect x="507" y="663" width="2" height="4" fill="#c4c4c4"/>
<rect x="518" y="469" width="2" height="3" fill="#c4c4c4"/>
<rect x="518" y="663" width="2" height="4" fill="#c4c4c4"/>
<rect x="529" y="469" width="2" height="3" fill="#c4c4c4"/>
<rect x="529" y="663" width="2" height="4" fill="#c4c4c4"/>
<rect x="541" y="469" width="2" height="3" fill="#c4c4c4"/>
<rect x="541" y="663" width="2" height="4" fill="#c4c4c4"/>
<rect x="552" y="469" width="2" height="3" fill="#c4c4c4"/>
<rect x="552" y="663" width="2" height="4" fill="#c4c4c4"/>
<rect x="563" y="469" width="2" height="3" fill="#c4c4c4"/>
<rect x="563" y="663" width="2" height="4" fill="#c4c4c4"/>
<rect x="574" y="469" width="2" height="3" fill="#c4c4c4"/>
<rect x="574" y="663" width="2" height="4" fill="#c4c4c4"/>
<rect x="586" y="469" width="2" height="3" fill="#c4c4c4"/>
<rect x="586" y="663" width="2" height="4" fill="#c4c4c4"/>
<rect x="597" y="469" width="2" height="3" fill="#c4c4c4"/>
<rect x="597" y="663" width="2" height="4" fill="#c4c4c4"/>
<rect x="608" y="469" width="2" height="3" fill="#c4c4c4"/>
<rect x="608" y="663" width="2" height="4" fill="#c4c4c4"/>
<rect x="619" y="469" width="2" height="3" fill="#c4c4c4"/>
<rect x="619" y="663" width="2" height="4" fill="#c4c4c4"/>
<rect x="631" y="469" width="2" height="3" fill="#c4c4c4"/>
<rect x="631" y="663" width="2" height="4" fill="#c4c4c4"/>
<rect x="642" y="469" width="2" height="3" fill="#c4c4c4"/>
<rect x="642" y="663" width="2" height="4" fill="#c4c4c4"/>
<rect x="653" y="469" width="2" height="3" fill="#c4c4c4"/>
<rect x="653" y="663" width="2" height="4" fill="#c4c4c4"/>
<rect x="664" y="469" width="2" height="3" fill="#c4c4c4"/>
<rect x="664" y="663" width="2" height="4" fill="#c4c4c4"/>
<rect x="676" y="469" width="2" height="3" fill="#c4c4c4"/>
<rect x="676" y="663" width="2" height="4" fill="#c4c4c4"/>
<rect x="687" y="469" width="2" height="3" fill="#c4c4c4"/>
<rect x="687" y="663" width="2" height="4" fill="#c4c4c4"/>
<rect x="698" y="469" width="2" height="3" fill="#c4c4c4"/>
<rect x="698" y="663" width="2" height="4" fill="#c4c4c4"/>
<rect x="710" y="469" width="2" height="3" fill="#c4c4c4"/>
<rect x="710" y="663" width="2" height="4" fill="#c4c4c4"/>
<rect x="721" y="469" width="2" height="3" fill="#c4c4c4"/>
<rect x="721" y="663" width="2" height="4" fill="#c4c4c4"/>
<rect x="732" y="469" width="2" height="3" fill="#c4c4c4"/>
<rect x="732" y="663" width="2" height="4" fill="#c4c4c4"/>
<rect x="743" y="469" width="2" height="3" fill="#c4c4c4"/>
<rect x="743" y="663" width="2" height="4" fill="#c4c4c4"/>
<rect x="755" y="469" width="2" height="3" fill="#c4c4c4"/>
<rect x="755" y="663" width="2" height="4" fill="#c4c4c4"/>
<rect x="766" y="469" width="2" height="3" fill="#c4c4c4"/>
<rect x="766" y="663" width="2" height="4" fill="#c4c4c4"/>
<rect x="777" y="469" width="2" height="3" fill="#c4c4c4"/>
<rect x="777" y="663" width="2" height="4" fill="#c4c4c4"/>
<rect x="788" y="469" width="2" height="3" fill="#c4c4c4"/>
<rect x="788" y="663" width="2" height="4" fill="#c4c4c4"/>
<rect x="800" y="469" width="2" height="3" fill="#c4c4c4"/>
<rect x="800" y="663" width="2" height="4" fill="#c4c4c4"/>
<rect x="811" y="469" width="2" height="3" fill="#c4c4c4"/>
<rect x="811" y="663" width="2" height="4" fill="#c4c4c4"/>
<rect x="822" y="469" width="2" height="3" fill="#c4c4c4"/>
<rect x="822" y="663" width="2" height="4" fill="#c4c4c4"/>
<rect x="833" y="469" width="2" height="3" fill="#c4c4c4"/>
<rect x="833" y="663" width="2" height="4" fill="#c4c4c4"/>
<rect x="845" y="469" width="2" height="3" fill="#c4c4c4"/>
<rect x="845" y="663" width="2" height="4" fill="#c4c4c4"/>
<rect x="856" y="469" width="2" height="3" fill="#c4c4c4"/>
<rect x="856" y="663" width="2" height="4" fill="#c4c4c4"/>
<rect x="867" y="469" width="2" height="3" fill="#c4c4c4"/>
<rect x="867" y="663" width="2" height="4" fill="#c4c4c4"/>
<rect x="277" y="497" width="3" height="2" fill="#c4c4c4"/>
<rect x="893" y="497" width="4" height="2" fill="#c4c4c4"/>
<rect x="277" y="528" width="3" height="2" fill="#c4c4c4"/>
<rect x="893" y="528" width="4" height="2" fill="#c4c4c4"/>
<rect x="277" y="559" width="3" height="2" fill="#c4c4c4"/>
<rect x="893" y="559" width="4" height="2" fill="#c4c4c4"/>
<rect x="277" y="590" width="3" height="2" fill="#c4c4c4"/>
<rect x="893" y="590" width="4" height="2" fill="#c4c4c4"/>
<rect x="277" y="621" width="3" height="2" fill="#c4c4c4"/>
<rect x="893" y="621" width="4" height="2" fill="#c4c4c4"/>
<rect x="277" y="652" width="3" height="2" fill="#c4c4c4"/>
<rect x="893" y="652" width="4" height="2" fill="#c4c4c4"/>
<path d="M276.5 468.5H897.5V667.5H276.5Z" fill="none" stroke="#000" stroke-width="1"/>
</g>
<text x="274" y="501.5" font-size="11" text-anchor="end" fill="#000">0</text>
<text x="274" y="532.5" font-size="11" text-anchor="end" fill="#000">-5</text>
<text x="274" y="563.5" font-size="11" text-anchor="end" fill="#000">-10</text>
<text x="274" y="594.5" font-size="11" text-anchor="end" fill="#000">-15</text>
<text x="274" y="625.5" font-size="11" text-anchor="end" fill="#000">-20</text>
<text x="274" y="656.5" font-size="11" text-anchor="end" fill="#000">-25</text>
<text transform="translate(247,568) rotate(-90)" font-size="13" text-anchor="middle" textLength="77.5" lengthAdjust="spacingAndGlyphs">Elevation (m)</text>
<text x="586.5" y="697.5" font-size="13" text-anchor="middle" textLength="105" lengthAdjust="spacingAndGlyphs">Geophone Station</text>
<text transform="translate(306.4,678) rotate(-90)" font-size="8" text-anchor="middle" textLength="11.4" lengthAdjust="spacingAndGlyphs" fill="#000">250</text>
<text transform="translate(317.7,678) rotate(-90)" font-size="8" text-anchor="middle" textLength="11.4" lengthAdjust="spacingAndGlyphs" fill="#000">252</text>
<text transform="translate(328.9,678) rotate(-90)" font-size="8" text-anchor="middle" textLength="11.4" lengthAdjust="spacingAndGlyphs" fill="#000">254</text>
<text transform="translate(340.2,678) rotate(-90)" font-size="8" text-anchor="middle" textLength="11.4" lengthAdjust="spacingAndGlyphs" fill="#000">256</text>
<text transform="translate(351.5,678) rotate(-90)" font-size="8" text-anchor="middle" textLength="11.4" lengthAdjust="spacingAndGlyphs" fill="#000">258</text>
<text transform="translate(362.7,678) rotate(-90)" font-size="8" text-anchor="middle" textLength="11.4" lengthAdjust="spacingAndGlyphs" fill="#000">260</text>
<text transform="translate(374.0,678) rotate(-90)" font-size="8" text-anchor="middle" textLength="11.4" lengthAdjust="spacingAndGlyphs" fill="#000">262</text>
<text transform="translate(385.2,678) rotate(-90)" font-size="8" text-anchor="middle" textLength="11.4" lengthAdjust="spacingAndGlyphs" fill="#000">264</text>
<text transform="translate(396.5,678) rotate(-90)" font-size="8" text-anchor="middle" textLength="11.4" lengthAdjust="spacingAndGlyphs" fill="#000">266</text>
<text transform="translate(407.8,678) rotate(-90)" font-size="8" text-anchor="middle" textLength="11.4" lengthAdjust="spacingAndGlyphs" fill="#000">268</text>
<text transform="translate(419.0,678) rotate(-90)" font-size="8" text-anchor="middle" textLength="11.4" lengthAdjust="spacingAndGlyphs" fill="#000">270</text>
<text transform="translate(430.3,678) rotate(-90)" font-size="8" text-anchor="middle" textLength="11.4" lengthAdjust="spacingAndGlyphs" fill="#000">272</text>
<text transform="translate(441.6,678) rotate(-90)" font-size="8" text-anchor="middle" textLength="11.4" lengthAdjust="spacingAndGlyphs" fill="#000">274</text>
<text transform="translate(452.8,678) rotate(-90)" font-size="8" text-anchor="middle" textLength="11.4" lengthAdjust="spacingAndGlyphs" fill="#000">276</text>
<text transform="translate(464.1,678) rotate(-90)" font-size="8" text-anchor="middle" textLength="11.4" lengthAdjust="spacingAndGlyphs" fill="#000">278</text>
<text transform="translate(475.4,678) rotate(-90)" font-size="8" text-anchor="middle" textLength="11.4" lengthAdjust="spacingAndGlyphs" fill="#000">280</text>
<text transform="translate(486.6,678) rotate(-90)" font-size="8" text-anchor="middle" textLength="11.4" lengthAdjust="spacingAndGlyphs" fill="#000">282</text>
<text transform="translate(497.9,678) rotate(-90)" font-size="8" text-anchor="middle" textLength="11.4" lengthAdjust="spacingAndGlyphs" fill="#000">284</text>
<text transform="translate(509.2,678) rotate(-90)" font-size="8" text-anchor="middle" textLength="11.4" lengthAdjust="spacingAndGlyphs" fill="#000">286</text>
<text transform="translate(520.4,678) rotate(-90)" font-size="8" text-anchor="middle" textLength="11.4" lengthAdjust="spacingAndGlyphs" fill="#000">288</text>
<text transform="translate(531.7,678) rotate(-90)" font-size="8" text-anchor="middle" textLength="11.4" lengthAdjust="spacingAndGlyphs" fill="#000">290</text>
<text transform="translate(542.9,678) rotate(-90)" font-size="8" text-anchor="middle" textLength="11.4" lengthAdjust="spacingAndGlyphs" fill="#000">292</text>
<text transform="translate(554.2,678) rotate(-90)" font-size="8" text-anchor="middle" textLength="11.4" lengthAdjust="spacingAndGlyphs" fill="#000">294</text>
<text transform="translate(565.5,678) rotate(-90)" font-size="8" text-anchor="middle" textLength="11.4" lengthAdjust="spacingAndGlyphs" fill="#000">296</text>
<text transform="translate(576.7,678) rotate(-90)" font-size="8" text-anchor="middle" textLength="11.4" lengthAdjust="spacingAndGlyphs" fill="#000">298</text>
<text transform="translate(588.0,678) rotate(-90)" font-size="8" text-anchor="middle" textLength="11.4" lengthAdjust="spacingAndGlyphs" fill="#000">300</text>
<text transform="translate(599.3,678) rotate(-90)" font-size="8" text-anchor="middle" textLength="11.4" lengthAdjust="spacingAndGlyphs" fill="#000">302</text>
<text transform="translate(610.5,678) rotate(-90)" font-size="8" text-anchor="middle" textLength="11.4" lengthAdjust="spacingAndGlyphs" fill="#000">304</text>
<text transform="translate(621.8,678) rotate(-90)" font-size="8" text-anchor="middle" textLength="11.4" lengthAdjust="spacingAndGlyphs" fill="#000">306</text>
<text transform="translate(633.1,678) rotate(-90)" font-size="8" text-anchor="middle" textLength="11.4" lengthAdjust="spacingAndGlyphs" fill="#000">308</text>
<text transform="translate(644.3,678) rotate(-90)" font-size="8" text-anchor="middle" textLength="11.4" lengthAdjust="spacingAndGlyphs" fill="#000">310</text>
<text transform="translate(655.6,678) rotate(-90)" font-size="8" text-anchor="middle" textLength="11.4" lengthAdjust="spacingAndGlyphs" fill="#000">312</text>
<text transform="translate(666.8,678) rotate(-90)" font-size="8" text-anchor="middle" textLength="11.4" lengthAdjust="spacingAndGlyphs" fill="#000">314</text>
<text transform="translate(678.1,678) rotate(-90)" font-size="8" text-anchor="middle" textLength="11.4" lengthAdjust="spacingAndGlyphs" fill="#000">316</text>
<text transform="translate(689.4,678) rotate(-90)" font-size="8" text-anchor="middle" textLength="11.4" lengthAdjust="spacingAndGlyphs" fill="#000">318</text>
<text transform="translate(700.6,678) rotate(-90)" font-size="8" text-anchor="middle" textLength="11.4" lengthAdjust="spacingAndGlyphs" fill="#000">320</text>
<text transform="translate(711.9,678) rotate(-90)" font-size="8" text-anchor="middle" textLength="11.4" lengthAdjust="spacingAndGlyphs" fill="#000">322</text>
<text transform="translate(723.2,678) rotate(-90)" font-size="8" text-anchor="middle" textLength="11.4" lengthAdjust="spacingAndGlyphs" fill="#000">324</text>
<text transform="translate(734.4,678) rotate(-90)" font-size="8" text-anchor="middle" textLength="11.4" lengthAdjust="spacingAndGlyphs" fill="#000">326</text>
<text transform="translate(745.7,678) rotate(-90)" font-size="8" text-anchor="middle" textLength="11.4" lengthAdjust="spacingAndGlyphs" fill="#000">328</text>
<text transform="translate(757.0,678) rotate(-90)" font-size="8" text-anchor="middle" textLength="11.4" lengthAdjust="spacingAndGlyphs" fill="#000">330</text>
<text transform="translate(768.2,678) rotate(-90)" font-size="8" text-anchor="middle" textLength="11.4" lengthAdjust="spacingAndGlyphs" fill="#000">332</text>
<text transform="translate(779.5,678) rotate(-90)" font-size="8" text-anchor="middle" textLength="11.4" lengthAdjust="spacingAndGlyphs" fill="#000">334</text>
<text transform="translate(790.8,678) rotate(-90)" font-size="8" text-anchor="middle" textLength="11.4" lengthAdjust="spacingAndGlyphs" fill="#000">336</text>
<text transform="translate(802.0,678) rotate(-90)" font-size="8" text-anchor="middle" textLength="11.4" lengthAdjust="spacingAndGlyphs" fill="#000">338</text>
<text transform="translate(813.3,678) rotate(-90)" font-size="8" text-anchor="middle" textLength="11.4" lengthAdjust="spacingAndGlyphs" fill="#000">340</text>
<text transform="translate(824.5,678) rotate(-90)" font-size="8" text-anchor="middle" textLength="11.4" lengthAdjust="spacingAndGlyphs" fill="#000">342</text>
<text transform="translate(835.8,678) rotate(-90)" font-size="8" text-anchor="middle" textLength="11.4" lengthAdjust="spacingAndGlyphs" fill="#000">344</text>
<text transform="translate(847.1,678) rotate(-90)" font-size="8" text-anchor="middle" textLength="11.4" lengthAdjust="spacingAndGlyphs" fill="#000">346</text>
<text transform="translate(858.3,678) rotate(-90)" font-size="8" text-anchor="middle" textLength="11.4" lengthAdjust="spacingAndGlyphs" fill="#000">348</text>
<text transform="translate(869.6,678) rotate(-90)" font-size="8" text-anchor="middle" textLength="11.4" lengthAdjust="spacingAndGlyphs" fill="#000">350</text>
<text x="586" y="531.2" font-size="10.5" textLength="62.5" lengthAdjust="spacingAndGlyphs" fill="#111">Vp=2098m/s</text>
<text x="586" y="583.0" font-size="10.5" textLength="62.5" lengthAdjust="spacingAndGlyphs" fill="#111">Vp=3328m/s</text>
<text x="586" y="626.3" font-size="10.5" textLength="62.5" lengthAdjust="spacingAndGlyphs" fill="#111">Vp=4991m/s</text></svg>

<svg class="abs" style="left:0;top:0;pointer-events:none" width="1161" height="726" viewBox="0 0 1161 726">
<defs><linearGradient id="ov" x1="0" y1="0" x2="1" y2="0"><stop offset="0" stop-color="#e8e8e8"/><stop offset="0.45" stop-color="#cfcfcf"/><stop offset="1" stop-color="#9c9c9c"/></linearGradient><linearGradient id="ov2" x1="0" y1="0" x2="1" y2="0"><stop offset="0" stop-color="#d4d4d4"/><stop offset="0.5" stop-color="#bdbdbd"/><stop offset="1" stop-color="#8e8e8e"/></linearGradient></defs>
<path d="M224.9 234.0V254.8H199.9L203.9 251.0H221.1V238.0Z" fill="#151515"/>
<ellipse cx="194.9" cy="243.5" rx="5.9" ry="11.4" fill="url(#ov)" stroke="#5a5a5a" stroke-width="0.7"/><path d="M190.4 243.5H199.4" stroke="#9a9a9a" stroke-width="0.8"/><path d="M192.70000000000002 241.0L194.9 237.0L197.1 241.0Z" fill="none" stroke="#3a3a3a" stroke-width="0.7"/><path d="M192.70000000000002 246.0L194.9 250.0L197.1 246.0Z" fill="none" stroke="#3a3a3a" stroke-width="0.7"/>
<text x="206" y="247.8" font-size="9.5" fill="#f4f4f4">4</text>
<path d="M225.9 407.9V428.7H200.9L204.9 424.9H222.1V411.9Z" fill="#151515"/>
<ellipse cx="195.9" cy="417.4" rx="5.9" ry="11.4" fill="url(#ov)" stroke="#5a5a5a" stroke-width="0.7"/><path d="M191.4 417.4H200.4" stroke="#9a9a9a" stroke-width="0.8"/><path d="M193.70000000000002 414.9L195.9 410.9L198.1 414.9Z" fill="none" stroke="#3a3a3a" stroke-width="0.7"/><path d="M193.70000000000002 419.9L195.9 423.9L198.1 419.9Z" fill="none" stroke="#3a3a3a" stroke-width="0.7"/>
<text x="207" y="421.7" font-size="9.5" fill="#f4f4f4">-4</text>
<path d="M208.8 463.3H232.7L228.7 466.8H212.3V480.8L208.8 484.3Z" fill="#dadada"/><rect x="212.3" y="466.8" width="16.399999999999977" height="14" fill="#fafafa"/><ellipse cx="202.8" cy="473.5" rx="5.9" ry="11.4" fill="url(#ov2)" stroke="#8a8a8a" stroke-width="0.7"/><path d="M198.3 473.5H207.3" stroke="#9a9a9a" stroke-width="0.8"/><path d="M200.60000000000002 471.0L202.8 467.0L205.0 471.0Z" fill="none" stroke="#3a3a3a" stroke-width="0.7"/><path d="M200.60000000000002 476.0L202.8 480.0L205.0 476.0Z" fill="none" stroke="#3a3a3a" stroke-width="0.7"/><text x="214" y="477.1" font-size="9.5" fill="#000">5</text>
<path d="M208.8 656.0999999999999H232.7L228.7 659.5999999999999H212.3V673.5999999999999L208.8 677.0999999999999Z" fill="#dadada"/><rect x="212.3" y="659.5999999999999" width="16.399999999999977" height="14" fill="#fafafa"/><ellipse cx="202.8" cy="666.3" rx="5.9" ry="11.4" fill="url(#ov2)" stroke="#8a8a8a" stroke-width="0.7"/><path d="M198.3 666.3H207.3" stroke="#9a9a9a" stroke-width="0.8"/><path d="M200.60000000000002 663.8L202.8 659.8L205.0 663.8Z" fill="none" stroke="#3a3a3a" stroke-width="0.7"/><path d="M200.60000000000002 668.8L202.8 672.8L205.0 668.8Z" fill="none" stroke="#3a3a3a" stroke-width="0.7"/><text x="211.5" y="669.9" font-size="9.5" fill="#000">-5</text>
<path d="M923 507.09999999999997H977L973 510.59999999999997H926.5V524.5999999999999L923 528.0999999999999Z" fill="#dadada"/><rect x="926.5" y="510.59999999999997" width="46.5" height="14" fill="#fafafa"/><ellipse cx="917" cy="517.3" rx="5.9" ry="11.4" fill="url(#ov2)" stroke="#8a8a8a" stroke-width="0.7"/><path d="M912.5 517.3H921.5" stroke="#9a9a9a" stroke-width="0.8"/><path d="M914.8 514.8L917 510.79999999999995L919.2 514.8Z" fill="none" stroke="#3a3a3a" stroke-width="0.7"/><path d="M914.8 519.8L917 523.8L919.2 519.8Z" fill="none" stroke="#3a3a3a" stroke-width="0.7"/><text x="928" y="520.9" font-size="9.5" fill="#000">2</text>
<path d="M924 542.1999999999999H977L973 545.6999999999999H927.5V559.6999999999999L924 563.1999999999999Z" fill="#dadada"/><rect x="927.5" y="545.6999999999999" width="46.5" height="14" fill="#fafafa"/><ellipse cx="918" cy="552.4" rx="5.9" ry="11.4" fill="url(#ov2)" stroke="#8a8a8a" stroke-width="0.7"/><path d="M913.5 552.4H922.5" stroke="#9a9a9a" stroke-width="0.8"/><path d="M915.8 549.9L918 545.9L920.2 549.9Z" fill="none" stroke="#3a3a3a" stroke-width="0.7"/><path d="M915.8 554.9L918 558.9L920.2 554.9Z" fill="none" stroke="#3a3a3a" stroke-width="0.7"/><text x="929" y="556.0" font-size="9.5" fill="#000" textLength="22" lengthAdjust="spacingAndGlyphs">Small</text>
<g><path d="M213.2 529 L219 529 L226 544.6 L206.3 544.6 Z" fill="#8c8c3e"/><rect x="206.3" y="544.4" width="19.7" height="2.2" fill="#4a4a1e"/><circle cx="216.1" cy="526" r="3.2" fill="#8c8c3e"/><circle cx="216.1" cy="525.2" r="1.6" fill="#a0a050"/></g>
<g><path d="M199.3 621 L219 627 L219 633.2 L199.3 639.3 Z" fill="#5e5e5e" stroke="#8c8c8c" stroke-width="0.9"/><circle cx="221" cy="630.2" r="3" fill="#bdbdbd" stroke="#909090" stroke-width="0.6"/></g>
<rect x="243.5" y="671.5" width="36" height="18" fill="#fff" stroke="#a2a6b4"/><rect x="263" y="673" width="14.5" height="14" fill="#e9e9e9"/><path d="M263.5 674V686.5M277 674V686.5M263.5 680H277" stroke="#b4b4b4" stroke-width="1" fill="none"/><path d="M267.3 678L270.3 674.8L273.3 678Z M267.3 681.5L270.3 684.7L273.3 681.5Z" fill="#000"/><text x="247" y="684" font-size="9.5" fill="#000">-5</text>
<rect x="907.5" y="671.5" width="35" height="18" fill="#fff" stroke="#a2a6b4"/><rect x="926" y="673" width="14.5" height="14" fill="#e9e9e9"/><path d="M926.5 674V686.5M940 674V686.5M926.5 680H940" stroke="#b4b4b4" stroke-width="1" fill="none"/><path d="M930.3 678L933.3 674.8L936.3 678Z M930.3 681.5L933.3 684.7L936.3 681.5Z" fill="#000"/><text x="912" y="684" font-size="9.5" fill="#000">5</text>
<rect x="916.3" y="446.3" width="35" height="30.5" rx="4" fill="#fefafa"/>
<g fill="#66c626"><path d="M922 461.5 C922 453.5 928 448.6 934.5 448.6 C936.4 448.6 938 448.9 939.4 449.5 L939.6 447.6 L944.6 452.3 L938.3 454.6 L938.7 452.9 C937.4 452.5 936.2 452.4 934.7 452.5 C930 452.8 926.4 456.3 926.4 461.5 Z"/><path d="M948 459 C948.4 466 942.6 471 936 471 C933.4 471 931.2 470.4 929.6 469.6 L929.9 471.8 L925.5 468.6 L930 465.2 L930.2 466.9 C931.8 467.5 933.6 467.6 935.4 467.4 C939.8 466.9 943.4 463.8 943.4 459 Z" fill="#58b81a"/></g>
<text x="908.3" y="484.8" font-size="9.5" textLength="60.7" lengthAdjust="spacingAndGlyphs" fill="#000">Refresh Section</text>
<text x="914.2" y="503.8" font-size="9.5" textLength="30.6" lengthAdjust="spacingAndGlyphs" fill="#000">Bar Size</text>
<text x="924" y="539" font-size="9.5" textLength="34.5" lengthAdjust="spacingAndGlyphs" fill="#000">Font Size</text>
<path d="M918.5 577.5H941.5L938 581H922V592.5L918.5 596Z" fill="#dedede"/>
<path d="M941.5 577.5V596H918.5L922 592.5H938V581Z" fill="#fdfdfd"/>
<rect x="922" y="581" width="16" height="11.5" fill="#3399ff"/>
<text x="942" y="590.3" font-size="9.5" textLength="26" lengthAdjust="spacingAndGlyphs" fill="#000">Layer1</text>
<path d="M918.5 597.8H941.5L938 601.3H922V612.8L918.5 616.3Z" fill="#dedede"/>
<path d="M941.5 597.8V616.3H918.5L922 612.8H938V601.3Z" fill="#fdfdfd"/>
<rect x="922" y="601.3" width="16" height="11.5" fill="#94944a"/>
<text x="942" y="610.2" font-size="9.5" textLength="26" lengthAdjust="spacingAndGlyphs" fill="#000">Layer2</text>
<path d="M918.5 617.5H941.5L938 621H922V632.5L918.5 636Z" fill="#dedede"/>
<path d="M941.5 617.5V636H918.5L922 632.5H938V621Z" fill="#fdfdfd"/>
<rect x="922" y="621" width="16" height="11.5" fill="#b0b0b0"/>
<text x="942" y="628.4" font-size="9.5" textLength="26" lengthAdjust="spacingAndGlyphs" fill="#000">Layer3</text>
<rect x="943.5" y="595" width="2" height="1" fill="#333"/>
</svg>
<!-- green strip -->
<div class="abs" style="left:978px;top:169px;width:3px;height:532px;background:#0a0a0a"></div>
<div class="abs" style="left:981px;top:169px;width:19px;height:532.6px;background:#4a4a4a;z-index:2"></div><div class="abs" style="left:981px;top:169px;width:19px;height:530.6px;background:#e1e8d3;border-left:1px solid #f4f6ee;z-index:2"></div>
<div class="abs" style="left:981px;top:330px;width:10px;height:209px;z-index:3;border-radius:5px;background:linear-gradient(90deg,#d6dcc8 0,#f7f8f2 25%,#eef1e6 65%,#c4cbb4 100%);box-shadow:1px 1px 1px #b4bba4"></div>
<svg class="abs" style="left:986px;top:420px;z-index:3" width="14" height="20" viewBox="0 0 14 20"><rect x="1" y="1" width="3.5" height="18" fill="#6cbf2c" stroke="#4f9a1c" stroke-width="0.6"/><path d="M14 1 L4.5 10 L14 19 Z" fill="#7ed038" stroke="#4f9a1c" stroke-width="0.6"/></svg>

<!-- hodographs -->
<div class="abs" style="left:1008px;top:169.5px;width:153px;height:530.5px;background:#000;border-left:2px solid #fff;border-bottom:1.3px solid #fff"></div>
<div class="abs" style="left:1008px;top:169.5px;width:137px;height:18.6px;background:#fff;border-right:1px solid #909090;font-weight:bold;font-size:12px;line-height:19px;text-align:center;letter-spacing:-0.2px">Hodographs</div>
<div class="abs" style="left:1145px;top:169.5px;width:16px;height:529.2px;background:#eee;border-left:1px solid #fff"></div>
<svg class="abs" style="left:1145px;top:169px" width="16" height="532" viewBox="0 0 16 532"><path d="M5 12.9l3.6-3.7 3.6 3.7" fill="none" stroke="#505050" stroke-width="2.1"/><path d="M5 519.5l3.6 3.7 3.6-3.7" fill="none" stroke="#505050" stroke-width="2.1"/></svg>
<div class="abs hod" style="top:188.6px;line-height:16px;letter-spacing:0.12px">S0001</div>
<div class="abs hod" style="top:206.6px;line-height:16px;letter-spacing:0.12px">S0002</div>
<div class="abs hod" style="top:224.6px;line-height:16px;letter-spacing:0.12px">S0003</div>
<div class="abs hod" style="top:242.6px;line-height:16px;letter-spacing:0.12px">S0004</div>
<div class="abs hod" style="top:260.6px;line-height:16px;letter-spacing:0.12px">S0005</div>
<div class="abs hod" style="top:278.6px;line-height:16px;letter-spacing:0.12px">S16001</div>
<div class="abs hod" style="top:296.6px;line-height:16px;letter-spacing:0.12px">S16002</div>
<div class="abs hod" style="top:314.6px;line-height:16px;letter-spacing:0.12px">S16003</div>
<div class="abs hod" style="top:332.6px;line-height:16px;letter-spacing:0.12px">S16004</div>
<div class="abs hod" style="top:350.6px;line-height:16px;letter-spacing:0.12px">S16005</div>
<div class="abs hod" style="top:368.6px;line-height:16px;letter-spacing:0.12px">S30001</div>
<div class="abs hod" style="top:386.6px;line-height:16px;letter-spacing:0.12px">S30002</div>
<div class="abs hod" style="top:404.6px;line-height:16px;letter-spacing:0.12px">S30003</div>
<div class="abs hod" style="top:422.6px;line-height:16px;letter-spacing:0.12px">S30004</div>
<div class="abs hod" style="top:440.6px;line-height:16px;letter-spacing:0.12px">S30005</div>
<div class="abs hod" style="top:458.6px;line-height:16px;letter-spacing:0.12px">S3101</div>
<div class="abs hod" style="top:476.6px;line-height:16px;letter-spacing:0.12px">S3102</div>
<div class="abs hod" style="top:494.6px;line-height:16px;letter-spacing:0.12px">S3103</div>
<div class="abs hod" style="top:512.6px;line-height:16px;letter-spacing:0.12px">S47001</div>
<div class="abs hod" style="top:530.6px;line-height:16px;letter-spacing:0.12px">S47002</div>
<div class="abs hod" style="top:548.6px;line-height:16px;letter-spacing:0.12px">S47003</div>

<svg class="abs" style="left:0;top:0;pointer-events:none" width="1161" height="726" viewBox="0 0 1161 726">
<defs>
<linearGradient id="ga" x1="0" y1="0" x2="1" y2="1"><stop offset="0" stop-color="#4a9a18"/><stop offset="0.5" stop-color="#7ed038"/><stop offset="1" stop-color="#5db41e"/></linearGradient>
<radialGradient id="gh" cx="0.6" cy="0.55" r="0.7"><stop offset="0" stop-color="#86aad6"/><stop offset="1" stop-color="#3d6cae"/></radialGradient>
<linearGradient id="gi" x1="0" y1="0" x2="0" y2="1"><stop offset="0" stop-color="#4a9cf6"/><stop offset="0.45" stop-color="#0f72e6"/><stop offset="1" stop-color="#0a5fd2"/></linearGradient>
<linearGradient id="gx" x1="0" y1="0" x2="0" y2="1"><stop offset="0" stop-color="#f27a7a"/><stop offset="0.45" stop-color="#e01818"/><stop offset="1" stop-color="#c40808"/></linearGradient>
<linearGradient id="gf" x1="0" y1="0" x2="0" y2="1"><stop offset="0" stop-color="#7fb2ea"/><stop offset="1" stop-color="#3f7fcc"/></linearGradient>
<linearGradient id="gfl" x1="0" y1="0" x2="0" y2="1"><stop offset="0" stop-color="#4c4c4c"/><stop offset="1" stop-color="#262626"/></linearGradient>
<linearGradient id="gsl" x1="0" y1="0" x2="0" y2="1"><stop offset="0" stop-color="#b0b0b0"/><stop offset="1" stop-color="#151515"/></linearGradient>
<linearGradient id="gst" x1="0" y1="0" x2="0" y2="1"><stop offset="0" stop-color="#d86a6a"/><stop offset="0.5" stop-color="#b22020"/><stop offset="1" stop-color="#a01818"/></linearGradient>
<linearGradient id="gr" x1="0" y1="0" x2="0" y2="1"><stop offset="0" stop-color="#b4d0f0"/><stop offset="1" stop-color="#4f84c8"/></linearGradient>
<radialGradient id="gl" cx="0.4" cy="0.35" r="0.7"><stop offset="0" stop-color="#dbe8f6"/><stop offset="0.6" stop-color="#6d9bd0"/><stop offset="1" stop-color="#2f5f9e"/></radialGradient>
<radialGradient id="gy" cx="0.5" cy="0.5" r="0.5"><stop offset="0" stop-color="#ffffc0"/><stop offset="0.45" stop-color="#f4ee30"/><stop offset="1" stop-color="#f0e820" stop-opacity="0.75"/></radialGradient>
<path id="gar" d="M0.3 13 C0.5 6.5 4.2 0.6 9.2 0.2 C14.6 -0.2 18.3 4 18.6 9.6 L22.3 9.6 L13.7 16.3 L5.5 9.6 L10.6 9.6 C10.6 6.6 8.8 4.6 6.4 4.8 C3.6 5 1.5 8 0.3 13 Z"/>
</defs>
<use href="#gar" x="193.8" y="123.9" fill="url(#ga)"/>
<use href="#gar" x="289.8" y="123.9" fill="url(#ga)"/>
<use href="#gar" x="385.8" y="123.9" fill="url(#ga)"/>
<use href="#gar" x="495.8" y="123.9" fill="url(#ga)"/>
<use href="#gar" x="590.8" y="123.9" fill="url(#ga)"/>
<rect x="49.5" y="55.5" width="21" height="20" fill="#f0f0f0" stroke="#c6c6c6"/>
<path d="M61.3 58.8 L68 65.3 L61.3 71.9 L61.3 68.6 L57 68.6 L57 62 L61.3 62 Z" fill="#000"/><path d="M58.2 65.3H62.6M61.4 63.6L63.6 65.3L61.4 67" stroke="#fff" stroke-width="1.1" fill="none"/>
<path d="M53.5 63V67.7M55.5 63V67.7M57.5 59.3V61.2M59.5 59.3V61.2M57.5 69.5V71.4M59.5 69.5V71.4" stroke="#000" stroke-width="1"/>
<rect x="96.5" y="55.5" width="21" height="20" fill="#f0f0f0" stroke="#7c7c7c"/>
<polygon points="114.38,68.54 109.94,72.98 103.66,72.98 99.22,68.54 99.22,62.26 103.66,57.82 109.94,57.82 114.38,62.26" fill="#fff" stroke="#000" stroke-width="1"/>
<circle cx="106.8" cy="65.4" r="5.6" fill="url(#gst)"/>
<path d="M1127.5 32V77.5" stroke="#7a7a7a" stroke-width="1"/>
<rect x="1129.6" y="38.5" width="31" height="31" fill="#fff" stroke="#000" stroke-width="1.1"/>
<rect x="1132" y="41" width="19" height="16" fill="#000"/><rect x="1133" y="42" width="17" height="14" fill="#d6d6a2"/><rect x="1134" y="43" width="11.3" height="8" fill="#000"/>
<path d="M1134.2 48.6 C1135 44 1136.6 44 1137.4 47 C1138.2 50 1139.6 50 1140.4 47 C1141.2 44 1142.6 44 1143.6 47 L1145 49" stroke="#20d020" stroke-width="1.1" fill="none"/>
<ellipse cx="1147.6" cy="48" rx="1.3" ry="1.8" fill="#e8c8a0" stroke="#555" stroke-width="0.5"/><path d="M1146.6 43.3V45.2M1148.6 43.3V45.2" stroke="#888" stroke-width="0.7"/>
<path d="M1134.5 54 V56.5 L1138 60.6 H1142 L1144.5 57.8 H1148" stroke="#1020a0" stroke-width="1.1" fill="none"/>
<circle cx="1140" cy="57" r="1.9" fill="none" stroke="#e01010" stroke-width="1"/>
<path d="M1141.6 55.4 L1143.5 53.8 H1148.5" stroke="#f02020" stroke-width="1" fill="none" stroke-dasharray="2 0.8"/><path d="M1156 55.5H1159" stroke="#f02020" stroke-width="1"/>
<path d="M1148.3 51.5 L1156.3 55.5 L1148.3 59.7 Z" fill="#f4f010" stroke="#8a8a10" stroke-width="0.7"/><path d="M1150 55.5H1153.2M1151.6 54V57" stroke="#000" stroke-width="1"/>
<text x="1153.2" y="67" font-size="9" fill="#000">1</text>
<path d="M242.3 103.5 V94.3 L243.8 92.4 H246.4 L247.6 94 H255.2 V96.5" fill="#ffff00" stroke="#000" stroke-width="1"/><path d="M242.3 103.5 L246.2 97.3 H259.6 L255.8 103.5 Z" fill="#686868" stroke="#000" stroke-width="1.1"/><path d="M242.8 103 V94.6 L244 93 H246.2 L247.4 94.6 H254.6 V96.8 H246 Z" fill="#ffff00"/>
<path d="M287.2 98.5V101.5H289" stroke="#000" stroke-width="1" fill="none"/><rect x="285.1" y="95.6" width="3" height="3" fill="#fff" stroke="#000" stroke-width="0.9"/><rect x="287.2" y="101.4" width="3" height="3" fill="#fff" stroke="#000" stroke-width="0.9"/>
<path d="M601.2 98.5V101.5H603" stroke="#000" stroke-width="1" fill="none"/><rect x="599.1" y="95.6" width="3" height="3" fill="#fff" stroke="#000" stroke-width="0.9"/><rect x="601.2" y="101.4" width="3" height="3" fill="#fff" stroke="#000" stroke-width="0.9"/>
<circle cx="912" cy="101.6" r="10.9" fill="url(#gh)" stroke="#33609e" stroke-width="0.8"/><circle cx="912" cy="101.6" r="9.3" fill="none" stroke="#fff" stroke-width="1.1"/>
<text x="912" y="107.2" font-size="16.5" font-weight="bold" fill="#fff" text-anchor="middle">?</text>
<ellipse cx="955" cy="113.2" rx="8.5" ry="1.2" fill="#1a3a6a" opacity="0.55"/>
<circle cx="955.1" cy="100.8" r="11.2" fill="url(#gi)"/><ellipse cx="955.1" cy="95" rx="9" ry="5.5" fill="#fff" opacity="0.14"/>
<circle cx="955" cy="94.7" r="2.1" fill="#fff"/><path d="M951.8 98.2 H956.9 V106.6 H958.6 V108.6 H951.6 V106.6 H953.3 V100.2 H951.8 Z" fill="#fff"/>
<path d="M997.8 93.5 H1003 V109.5 H997.8 Z" fill="#9a9a9a" stroke="#707070" stroke-width="0.6"/>
<path d="M1003.6 90 H1014 L1017 92.6 V101 H1003.6 Z" fill="#f4f4f4" stroke="#b8b8b8" stroke-width="0.6"/><path d="M1006 93H1012M1006 95.2H1014.5" stroke="#8a8a8a" stroke-width="0.8"/>
<path d="M1001 98.7 L1020.8 98.2 L1019.6 110.4 L998.4 111 Z" fill="url(#gf)" stroke="#2f62a6" stroke-width="0.8"/>
<rect x="1036.2" y="90.4" width="24" height="22.2" rx="1.6" fill="url(#gfl)"/>
<rect x="1040.3" y="90.4" width="16" height="10.2" fill="#eef3f9"/><path d="M1041 95.3H1055.6M1041 98.2H1055.6" stroke="#a8c4e6" stroke-width="0.9"/>
<rect x="1040.9" y="104" width="12.2" height="8.6" fill="#c8c8c8"/><rect x="1040.9" y="104" width="12.2" height="1" fill="#efefef"/><rect x="1043" y="106" width="2.6" height="4.6" fill="#303030"/>
<rect x="1083.6" y="88" width="15" height="10" fill="#f2f2f2"/>
<rect x="1079.2" y="97.3" width="23.4" height="8.7" rx="1.6" fill="#f4f4f4" stroke="#d0d0d0" stroke-width="0.5"/>
<rect x="1083" y="100" width="15.6" height="4.6" fill="url(#gsl)"/>
<rect x="1083" y="107.3" width="16" height="4.7" fill="#fbfbfb"/>
<polygon points="1144.62,104.24 1138.34,110.52 1129.46,110.52 1123.18,104.24 1123.18,95.36 1129.46,89.08 1138.34,89.08 1144.62,95.36" fill="url(#gx)" stroke="#a00808" stroke-width="0.8"/>
<path d="M1128.4 94.3 L1139.4 105.3 M1139.4 94.3 L1128.4 105.3" stroke="#fff" stroke-width="3.6" stroke-linecap="butt"/>
<path d="M22.2 133.4 H35.8 L40 142.6 H18 Z" fill="#e4e4e4" stroke="#bcbcbc" stroke-width="0.6"/>
<rect x="17.8" y="142.4" width="22.4" height="6.4" rx="1.2" fill="#d4d4d4" stroke="#a8a8a8" stroke-width="0.6"/><rect x="20.5" y="144.5" width="8" height="2.2" fill="#9c9c9c"/><rect x="29.3" y="144.2" width="8" height="2.8" fill="#f6f6f6"/><rect x="28.6" y="144" width="0.9" height="3.2" fill="#333"/>
<path d="M19.6 133 C19.4 129.5 22.4 127.6 25.4 127.7 C29 127.8 31.2 130.4 31.3 134.2 L34 134.2 L29.6 141.4 L24.8 134.2 L27.4 134.2 C27.2 132 26 130.9 24.4 130.9 C22.4 130.9 20.6 131.8 19.6 133 Z" fill="#4d86cf" stroke="#3468b0" stroke-width="0.5"/>
<rect x="718.4" y="128.4" width="17.2" height="19.6" fill="#ececec" stroke="#c4c4c4" stroke-width="0.5"/><path d="M718.4 148.3H735.8" stroke="#5a5a5a" stroke-width="0.7" opacity="0.6"/><rect x="720" y="134" width="0.8" height="0.8" fill="#aaa"/><rect x="720" y="141" width="0.8" height="0.8" fill="#aaa"/>
<circle cx="733.6" cy="131.9" r="4.7" fill="url(#gy)"/>
<path d="M834.4 131 L845 137.8 L834.4 144.6 Z" fill="#ececec" stroke="#8c8c8c" stroke-width="0.8"/>
<rect x="931.6" y="128" width="20.8" height="21" rx="1.4" fill="#b47c2c" stroke="#8a5a18" stroke-width="0.6"/>
<rect x="934.2" y="130.8" width="15.6" height="16.4" fill="#f2f2f2"/><path d="M936 134.5H947.5M936 137H947.5M936 139.5H947.5M936 142H943" stroke="#c0c0c0" stroke-width="0.8"/><path d="M945.6 147.2 V143.4 H949.8 Z" fill="#9a9a9a"/>
<path d="M937 131.4 V128.6 H939.6 V126.4 H944.4 V128.6 H947 V131.4 Z" fill="#a8a8a0" stroke="#7c7c74" stroke-width="0.5"/>
<rect x="1044" y="128.4" width="15.8" height="17.4" fill="#cfe0f4" opacity="0.6"/>
<path d="M1050 131.6 H1065.8 V146 L1062 149.6 H1050 Z" fill="#f2f2f2" stroke="#bdbdbd" stroke-width="0.6"/><path d="M1052.5 135.5H1063.3M1052.5 138H1063.3M1052.5 140.5H1063.3M1052.5 143H1063.3" stroke="#bcbcbc" stroke-width="0.8"/><path d="M1062 149.6 V146 H1065.8 Z" fill="#a8a8a8"/>
<path d="M11 186.5 C10.6 181.5 14.6 178 19.6 178 C21.6 178 23.4 178.5 24.8 179.3 L26.2 176.8 L29.6 183.8 L21.8 184.6 L23.2 182.2 C22.2 181.7 21 181.4 19.8 181.5 C16.6 181.7 14.4 183.6 14.4 186.5 Z" fill="url(#gr)" stroke="#4a7ec0" stroke-width="0.5"/>
<path d="M29.4 186.2 C29.8 191.2 25.8 194.7 20.8 194.7 C18.8 194.7 17 194.2 15.6 193.4 L14.2 195.9 L10.8 188.9 L18.6 188.1 L17.2 190.5 C18.2 191 19.4 191.3 20.6 191.2 C23.8 191 26 189.1 26 186.2 Z" fill="url(#gr)" stroke="#4a7ec0" stroke-width="0.5"/>
<path d="M107.4 190.4 L114.8 196.6" stroke="#b8b8b8" stroke-width="3" stroke-linecap="round"/><path d="M107.4 190.4 L114.8 196.6" stroke="#e4e4e4" stroke-width="1.2" stroke-linecap="round"/>
<circle cx="102.4" cy="184.8" r="6.6" fill="url(#gl)" stroke="#dcdcdc" stroke-width="1.8"/><path d="M100.5 196.3H105.5" stroke="#777" stroke-width="0.9"/>
</svg>
<!-- status bar -->
<div class="abs" style="left:0;top:703px;width:1161px;height:23px;background:#e1e8d3"></div>
<div class="abs" style="left:0;top:700px;width:1161px;height:4px;background:linear-gradient(#000 0,#000 1.8px,#8e8e8e 2px,#b4b4b4 3px,#d4dac8 4px)"></div>
<svg class="abs" style="left:0;top:706px" width="60" height="20" viewBox="0 706 60 20"><text x="3" y="718.9" font-size="11" fill="#1a1af6" textLength="42.6" lengthAdjust="spacingAndGlyphs">XGEOPH</text></svg>
<svg class="abs" style="left:870px;top:706px" width="291" height="20" viewBox="870 706 291 20"><text x="877.6" y="720.2" font-size="10" font-style="italic" fill="#0c0cd0" stroke="#0c0cd0" stroke-width="0.15" textLength="278" lengthAdjust="spacingAndGlyphs">Geophysical Time Series Acquisition and Processing Software. EMdP, 2020</text></svg>

</div>
</body>
</html>
